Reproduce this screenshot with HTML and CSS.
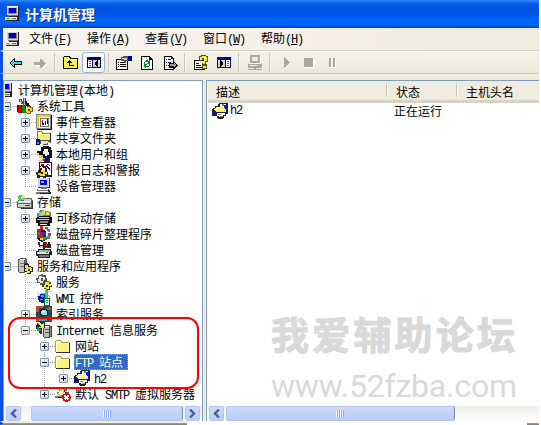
FILE: index.html
```
<!DOCTYPE html>
<html lang="zh-CN">
<head>
  <meta charset="UTF-8">
  <title>计算机管理</title>
  <link rel="stylesheet" href="styles.css">
</head>
<body>
  <svg class="defs" width="0" height="0">
    <symbol id="pc" viewBox="0 0 16 16">
      <path fill="#777" d="M3 1h11v9H3zM1 11h13v4H1z"/>
      <path fill="#d8d8d0" d="M2 0h11v9H2zM0 11h12v3H0z"/>
      <path fill="#fff" d="M2 0h11v1H2zM0 11h12v1H0z"/>
      <path fill="#222" d="M13 1h1v9h-1zM4 10h10v1H4zM12 11h2v4h-2zM1 14h12v1H1z"/>
      <path fill="#888" d="M3 2h9v6H3z"/><path fill="#0000d8" d="M4 2h7v5H4z"/>
      <path fill="#0a0" d="M2 12h2v1H2z"/><path fill="#666" d="M7 12h4v1H7z"/>
    </symbol>
    <symbol id="tools" viewBox="0 0 16 16">
      <path fill="#555" d="M2 1h3v2h2v3H4V4H2zM6 0h3v8H6z"/>
      <path fill="#bbb" d="M3 2h1v2h1v1H3zM7 0h1v7H7z"/>
      <path fill="#111" d="M8 3h2v2h2v2h1v3h-2V8H9zM0 7h1v7H0z"/>
      <path fill="#d00" d="M1 7h3v8H1z"/><path fill="#090" d="M5 7h3v8H5z"/>
      <path fill="#111" d="M4 7h1v8H4zM8 8h1v6H8z"/>
      <path fill="#6b6300" d="M10 8h4v1h2v5h-2v2h-4v-1H8v-4h2z"/>
      <path fill="#f2dc28" d="M10 9h3v1h2v3h-2v2h-3v-1H9v-3h1z"/><path fill="#444" d="M11 11h2v2h-2z"/>
    </symbol>
    <symbol id="event" viewBox="0 0 16 16">
      <path fill="#888" d="M0 0h15v15H0z"/>
      <path fill="#ffffb0" d="M1 1h13v13H1z"/><path fill="#e6d22c" d="M1 1h2v13H1zM3 1h11v2H3z"/>
      <path fill="#777" d="M4 4h9v9H4z"/><path fill="#fff" d="M5 5h7v7H5z"/><path fill="#d00" d="M6 6h1v3H6zM9 7h1v4H9z"/>
      <path fill="#00c" d="M6 9h2v2H6zM11 5h1v5h-1z"/><path fill="#111" d="M15 1h1v15H1v-1h14z"/>
    </symbol>
    <symbol id="folder" viewBox="0 0 16 16">
      <path fill="#a39d4c" d="M0 3h1V2h5v1h1v1h7v10H0z"/><path fill="#333" d="M14 5h1v10H1v-1h13z"/>
      <path fill="#ffffc8" d="M1 3h5v2h8v1H1z"/><path fill="#faf283" d="M1 6h13v8H1z"/><path fill="#ffffc8" d="M1 5h1v9H1z"/>
    </symbol>
    <symbol id="share" viewBox="0 0 16 16">
      <path fill="#8a8420" d="M1 1h5v1h1v1h7v8H1z"/><path fill="#222" d="M14 3h1v9H4v-1h10z"/>
      <path fill="#ffffb0" d="M2 2h4v2h8v1H2z"/><path fill="#f7ee70" d="M2 5h12v5H2z"/>
      <path fill="#555" d="M4 10h9v1h2v2h-3v2H7v-1H4z"/><path fill="#ddd" d="M5 11h7v1h2v1h-3v1H5z"/>
      <path fill="#0010a0" d="M0 9h4v6H0z"/><path fill="#3aa" d="M1 12h2v2H1z"/>
    </symbol>
    <symbol id="users" viewBox="0 0 16 16">
      <path fill="#111" d="M5 1h2V0h6v1h2v3h1v8h-2v3H9v-2L3 9H1V5h4z"/>
      <path fill="#fff" d="M8 3h4v3h1v3h-2v2H9V8H7V5h1z"/>
      <path fill="#b4b4b4" d="M3 9h4v3h3v3H3z"/><path fill="#001ca0" d="M9 10h3v2h2v4H8v-3h1z"/>
      <path fill="#f4d634" d="M1 7h2v2h2v2h2v2H5l-4-4z"/><path fill="#d00" d="M7 13h2v2H7z"/><path fill="#fff" d="M2 12h4v2H2z"/>
    </symbol>
    <symbol id="perf" viewBox="0 0 16 16">
      <path fill="#222" d="M3 0h13v15H3z"/><path fill="#fff" d="M4 1h11v12H4z"/>
      <path fill="none" stroke="#d00" d="M4 5l3-3 2 4 3-4 2 2"/><path fill="none" stroke="#00c" d="M5 2l3 4 3-2 3 4"/>
      <path fill="#222" d="M4 6h2v2h3V6h2v4h1v3h-2v3H7v-1H4v1H1v-3H0v-3h2V8h2z"/>
      <path fill="#e9d92c" d="M5 8h4v2h2v2H9v2H4v-1H2v-2h3z"/><path fill="#222" d="M5 10h2v2H5z"/>
    </symbol>
    <symbol id="device" viewBox="0 0 16 16">
      <path fill="#333" d="M2 0h12v10H2z"/><path fill="#d5d5d5" d="M2 0h11v9H2z"/>
      <path fill="#0000d0" d="M4 2h7v5H4z"/><path fill="#70b8ff" d="M5 3h3v2H5z"/>
      <path fill="#777" d="M5 9h6v2H5zM1 11h12v3h2v2H0v-2h1z"/><path fill="#eee" d="M2 11h10v1H2zM1 13h11v1H1z"/>
      <path fill="#222" d="M12 12h2v2h1v2H4v-1h9z"/>
    </symbol>
    <symbol id="storage" viewBox="0 0 16 16">
      <path fill="#666" d="M1 6h6V4h8v2h1v9H4v-1H0V7h1z"/><path fill="#d4d4d0" d="M7 5h7v2H7zM1 7h13v2H1zM1 10h13v3H1z"/>
      <path fill="#fff" d="M2 7h11v1H2z"/><path fill="#333" d="M8 11h5v1H8zM15 7h1v8H4v-1h11z"/>
      <path fill="#47c85a" d="M2 1h3v1h2v3H4v2H2V5H1V2h1z"/><path fill="#e9ea48" d="M5 1h2v1h1v2H5z"/><path fill="#5ac8e8" d="M4 4h4v2H4z"/><path fill="#fff" d="M4 3h1v1H4z"/>
    </symbol>
    <symbol id="remov" viewBox="0 0 16 16">
      <path fill="#777" d="M4 0h4v1h5v1h2v5H1V3h2z"/><path fill="#5cd8d8" d="M3 2h4v4H3z"/><path fill="#b8e860" d="M6 1h3v4H6z"/>
      <path fill="#f0e850" d="M10 2h3v3h-3z"/><path fill="#111" d="M1 7h2V6h11v1h2v6h-2v3H2v-3H0V8h1z"/>
      <path fill="#ccc" d="M3 7h10v1H3zM1 9h12v1H1z"/><path fill="#888" d="M4 11h8v2H4z"/><path fill="#fff" d="M4 14h7v1H4z"/>
    </symbol>
    <symbol id="defrag" viewBox="0 0 16 16">
      <path fill="#111" d="M1 4l4-2 5 3v9l-4 2-5-3z"/><path fill="#d0142c" d="M1 3h4v3h3v8H4v-2H1z"/>
      <path fill="#1a32d8" d="M6 6h4v4H6z"/><path fill="#10a040" d="M6 11h5v3H7v1H6zM2 6h2v3H2z"/><path fill="#f0d820" d="M4 12h3v2H4z"/>
      <path fill="#c420b0" d="M9 1h3v2H9zM12 7h3v3h-3z"/><path fill="#20a870" d="M11 3h3v3h-2zM11 10h3v3h-3z"/><path fill="#d82020" d="M4 0h3v3H4z"/>
    </symbol>
    <symbol id="diskmg" viewBox="0 0 16 16">
      <path fill="#222" d="M2 0h2v3h3V0h2v7H7V5H3zM12 0h2v2h1v4h-4V2h1z"/><path fill="#d00" d="M9 0h2v6H9z"/><path fill="#ccc" d="M4 4h3v2H4z"/>
      <path fill="#222" d="M2 7h13v2h1v4h-2v3H2v-2H0V9h2z"/><path fill="#aaa" d="M3 8h11v2H3z"/><path fill="#ddd" d="M1 10h12v2H1z"/>
      <path fill="#777" d="M3 13h10v2H3z"/><path fill="#0b0" d="M10 10h2v1h-2z"/>
    </symbol>
    <symbol id="apps" viewBox="0 0 16 16">
      <path fill="#555" d="M1 1h2V0h6v1h1v13H8v1H2v-1H1z"/><path fill="#c8c8c4" d="M2 2h5v12H2z"/><path fill="#fff" d="M3 1h5v1H3z"/><path fill="#777" d="M3 5h4v1H3zM3 8h4v1H3zM8 2h1v11H8z"/>
      <path fill="#222" d="M8 5h3v1h1v2h2v1h2v5h-2v2h-4v-2H7V6h1z"/><path fill="#f2e23a" d="M8 7h3v2h3v1h1v3h-2v2h-3v-2H8v-2h1v-1H8z"/><path fill="#333" d="M11 11h2v2h-2z"/>
    </symbol>
    <symbol id="gears" viewBox="0 0 16 16">
      <path fill="#555" d="M3 1h2V0h2v1h3v3h1v3H9v3H6v1H4V9H1V6H0V4h2z"/><path fill="#e4e4e4" d="M3 2h3v1h3v4H7v2H4V8H2V5h1z"/><path fill="#555" d="M5 4h2v3H5z"/>
      <path fill="#444" d="M8 6h2v1h3v1h2v3h1v2h-2v3h-4v-1H8v-2H6v-3h2z"/><path fill="#f2e23a" d="M9 8h4v2h2v2h-2v3h-3v-1H8v-3h1z"/><path fill="#333" d="M10 11h2v2h-2z"/>
    </symbol>
    <symbol id="wmi" viewBox="0 0 16 16">
      <path fill="none" stroke="#e8e020" d="M1 2l12 11M13 1L1 13"/><path fill="none" stroke="#2cd8e8" d="M1 7q6-7 13 0"/>
      <path fill="#0820a8" d="M4 4h6v1h1v6h-1v2H5v-1H3v-2H2V6h2z"/><path fill="#20b8e8" d="M5 5h3v2H5zM4 9h3v1H4z"/>
      <path fill="#28d848" d="M9 0h3v8H9z"/><path fill="#0a6820" d="M8 8h6v8H8z"/><path fill="#fff" d="M9 9h4v6H9z"/><path fill="#18b840" d="M10 10h2v1h-2zM10 12h2v1h-2z"/>
    </symbol>
    <symbol id="index" viewBox="0 0 16 16">
      <path fill="#164a56" d="M0 0h16v16H0z"/><path fill="#c84a26" d="M0 0h7v2H3v4H0zM11 1h4v3h-4zM0 11h4v4H0z"/><path fill="#20a8a8" d="M4 12h7v3H4z"/>
      <path fill="#111" d="M5 3h6v1h1v6H5V9H4V4h1z"/><path fill="#8fe4f0" d="M6 4h4v1h1v4H6V8H5V5h1z"/><path fill="#fff" d="M7 5h2v1H7z"/><path fill="#e03020" d="M11 10h2v2h2v3h-2v-2h-2z"/>
    </symbol>
    <symbol id="iis" viewBox="0 0 16 16">
      <path fill="#444" d="M7 3h7v1h2v11h-2v1H8v-1H7z"/><path fill="#bcbcbc" d="M8 5h5v10H8z"/><path fill="#fff" d="M8 4h5v1H8z"/><path fill="#555" d="M9 7h4v1H9zM9 10h4v1H9z"/><path fill="#888" d="M14 5h1v9h-1z"/>
      <path fill="#222" d="M1 1h3V0h5v6H6v4H3V7H0V3h1z"/><path fill="#f4ee28" d="M2 1h3v1h2V1h1v5H3V5h2z"/><path fill="#18a038" d="M1 5h2v2h2v3H3V9H1z"/><path fill="#123098" d="M3 9h3v3H4z"/>
    </symbol>
    <symbol id="ftp" viewBox="0 0 16 16">
      <path fill="#222" d="M7 0h9v11h-2v2h-2v2h-1v1H6v-1H5v-2H0V6h1V5h2V3h3V1h1z"/><path fill="#fff" d="M8 1h6v3H8z"/><path fill="#18b840" d="M10 1h2v2h-2z"/><path fill="#0818c8" d="M12 2h3v3h-3zM15 1v9h-1V2z"/>
      <path fill="#fff" d="M4 4h8v1H4zM2 6h2v1H2z"/><path fill="#f5ef63" d="M3 5h10v1h1v3H3z"/><path fill="#ffffc0" d="M4 6h9v1H4z"/>
      <path fill="#fff" d="M5 10h8v2h-2v2H7v-1H5z"/><path fill="#888" d="M6 11h3v1H6zM8 13h3v1H8z"/><path fill="#0818a0" d="M0 8h4v5H0z"/>
    </symbol>
    <symbol id="smtp" viewBox="0 0 16 16">
      <path fill="#777" d="M4 2h5v1h3v3h2v5H3v1H0v-2h2V6h2z"/><path fill="#fff" d="M4 5h6v4H3z"/><path fill="#e8e04a" d="M5 3h4v2h3v2H8V5H5zM2 8h4v2H2z"/><path fill="#222" d="M9 4h1v2h2v2h-2zM3 11h5v1H3z"/>
      <circle cx="11.500" cy="11.500" r="4.500" fill="#e00"/><path stroke="#fff" stroke-width="1.500" d="M9.500 9.500l4 4M13.500 9.500l-4 4"/>
    </symbol>
  </svg>

  <div class="window">
    <header class="titlebar">
      <svg class="ico"><use href="#pc"/></svg>
      <h1>计算机管理</h1>
    </header>

    <nav class="menubar">
      <svg class="ico"><use href="#pc"/></svg>
      <a>文件<span class="en">(<u>F</u>)</span></a>
      <a>操作<span class="en">(<u>A</u>)</span></a>
      <a>查看<span class="en">(<u>V</u>)</span></a>
      <a>窗口<span class="en">(<u>W</u>)</span></a>
      <a>帮助<span class="en">(<u>H</u>)</span></a>
    </nav>

    <div class="toolbar">
      <span class="tool"><svg class="ico"><path fill="#000" d="M1 7h1V6h1V5h1V4h1V3h1v3h7v4H6v3H5v-1H4v-1H3v-1H2V9H1z"/><path fill="#20e0e8" d="M2 7h1V6h1V5h1v2h7v2H5v2H4v-1H3V9H2z"/></svg></span>
      <span class="tool"><svg class="ico"><path fill="#fff" d="M3 8h7V5h1v1h2v2h2v2h-1v1h-1v1h-1v1h-1v1h-1v-3H3z"/><path fill="#aca899" d="M2 7h6V4h2v1h1v1h1v1h1v1h1v1h-1v1h-1v1h-1v1h-1v1H8v-3H2z"/></svg></span>
      <span class="sep"></span>
      <span class="tool"><svg class="ico"><path fill="#000" d="M1 1h6v1h1v1h7v11H0V2h1z"/><path fill="#f8f04c" d="M1 3h6v1h7v9H1z"/><path fill="#ffffa8" d="M1 2h5v1H1zM1 4h13v1H1z"/><path fill="#000" d="M6 5h1v1h1v1h1v1H7v2h4v1H6V8H4V7h1V6h1z"/></svg></span>
      <span class="tool pressed"><svg class="ico"><path fill="#000080" d="M1 2h14v11H1z"/><path fill="#fff" d="M2 5h4v7H2z"/><path fill="#d8d4c4" d="M7 5h7v7H7z"/><path fill="#3858d0" d="M3 6h2v1H3zM3 8h2v1H3zM3 10h2v1H3z"/><path fill="#000" d="M12 5v7h-1v-1h-1v-1H9V7h1V6h1V5z"/></svg></span>
      <span class="sep tight"></span>
      <span class="tool"><svg class="ico"><path fill="#000" d="M0 4h12v11H0z"/><path fill="#fff" d="M1 5h10v9H1z"/><path fill="#000" d="M2 7h1v1H2zM4 7h5v1H4zM2 9h1v1H2zM4 9h6v1H4zM2 11h1v1H2zM4 11h6v1H4z"/><path fill="#555" d="M5 2h2V1h5v5h-2v2H8V6H5z"/><path fill="#ccc" d="M6 3h5v2H8V4H6z"/><path fill="#000090" d="M12 1h4v5h-4z"/></svg></span>
      <span class="tool"><svg class="ico"><path fill="#000" d="M2 1h9v1h1v1h1v1h1v11H2z"/><path fill="#fff" d="M3 2h7v3h3v9H3z"/><path fill="#098a20" d="M6 6h1V5h2v1h1V5h1v4H8V8h1V7H6v2H5V7h1zM5 9h3v1H7v1h3V9h1v2h-1v1H7v1H6v-1H5z"/></svg></span>
      <span class="tool"><svg class="ico"><path fill="#000" d="M2 1h8v1h1v1h1v12H2z"/><path fill="#fff" d="M3 2h6v2h2v10H3z"/><path fill="#0818a0" d="M4 4h1v1H4zM6 4h3v1H6zM4 7h1v1H4zM6 7h3v1H6zM4 10h1v1H4zM6 10h2v1H6z"/><path fill="#000" d="M7 8h4V6h1v1h1v1h1v1h1v1h1v1h-1v1h-1v1h-1v1h-1v1h-1v-2H7z"/><path fill="#999" d="M8 9h4V8h1v1h1v2h-1v1h-1v-1H8z"/></svg></span>
      <span class="sep"></span>
      <span class="tool"><svg class="ico"><path fill="#000" d="M1 5h11v10H1z"/><path fill="#fff" d="M2 6h9v8H2z"/><path fill="#000" d="M3 8h3v1H3zM3 10h5v1H3zM3 12h6v1H3z"/><path fill="#55500a" d="M6 1h2V0h5v1h2v6h-2v2h1v5H9V8h2V5H9v1H6z"/><path fill="#fff028" d="M7 2h2V1h4v1h1v4h-2v3h-2V7h1V3H9v2H7zM10 11h3v2h-3z"/></svg></span>
      <span class="tool"><svg class="ico"><path fill="#000080" d="M1 2h14v11H1z"/><path fill="#d8d4c4" d="M2 5h7v7H2z"/><path fill="#fff" d="M10 5h4v7h-4z"/><path fill="#3858d0" d="M11 6h2v1h-2zM11 8h2v1h-2zM11 10h2v1h-2z"/><path fill="#000" d="M4 5h1v1h1v1h1v3H6v1H5v1H4z"/></svg></span>
      <span class="sep"></span>
      <span class="tool"><svg class="ico"><path fill="#fff" d="M4 1h10v8H4zM2 11h14v2H2z"/><path fill="#aca899" d="M3 0h10v8H3zM1 9h14v4H1zM7 13h2v1h6v1H1v-1h6z"/><path fill="#efecdf" d="M5 2h6v4H5zM2 10h8v1H2z"/></svg></span>
      <span class="sep"></span>
      <span class="tool"><svg class="ico"><path fill="#fff" d="M6 3l6 5-6 6z"/><path fill="#aca899" d="M6 2h1v1h1v1h1v1h1v1h1v1h1v1h-1v1h-1v1H9v1H8v1H7v1H6z"/></svg></span>
      <span class="tool"><svg class="ico"><path fill="#fff" d="M4 4h10v9H4z"/><path fill="#aca899" d="M3 3h9v9H3z"/></svg></span>
      <span class="tool"><svg class="ico"><path fill="#fff" d="M5 4h3v9H5zM9 4h3v9H9z"/><path fill="#aca899" d="M5 3h2v9H5zM9 3h2v9H9z"/></svg></span>
    </div>

    <main class="panes">
      <section class="pane left">
        <div class="tree">
          <div class="row root"><svg class="ico"><use href="#pc"/></svg><span class="name">计算机管理<span class="en">(</span>本地<span class="en">)</span></span></div>
          <ul class="top">
            <li>
              <div class="row"><i class="exp open"></i><svg class="ico"><use href="#tools"/></svg><span class="name">系统工具</span></div>
              <ul>
                <li><div class="row"><i class="exp"></i><svg class="ico"><use href="#event"/></svg><span class="name">事件查看器</span></div></li>
                <li><div class="row"><i class="exp"></i><svg class="ico"><use href="#share"/></svg><span class="name">共享文件夹</span></div></li>
                <li><div class="row"><i class="exp"></i><svg class="ico"><use href="#users"/></svg><span class="name">本地用户和组</span></div></li>
                <li><div class="row"><i class="exp"></i><svg class="ico"><use href="#perf"/></svg><span class="name">性能日志和警报</span></div></li>
                <li><div class="row"><svg class="ico"><use href="#device"/></svg><span class="name">设备管理器</span></div></li>
              </ul>
            </li>
            <li>
              <div class="row"><i class="exp open"></i><svg class="ico"><use href="#storage"/></svg><span class="name">存储</span></div>
              <ul>
                <li><div class="row"><i class="exp"></i><svg class="ico"><use href="#remov"/></svg><span class="name">可移动存储</span></div></li>
                <li><div class="row"><svg class="ico"><use href="#defrag"/></svg><span class="name">磁盘碎片整理程序</span></div></li>
                <li><div class="row"><svg class="ico"><use href="#diskmg"/></svg><span class="name">磁盘管理</span></div></li>
              </ul>
            </li>
            <li>
              <div class="row"><i class="exp open"></i><svg class="ico"><use href="#apps"/></svg><span class="name">服务和应用程序</span></div>
              <ul>
                <li><div class="row"><svg class="ico"><use href="#gears"/></svg><span class="name">服务</span></div></li>
                <li><div class="row"><svg class="ico"><use href="#wmi"/></svg><span class="name"><span class="en">WMI </span>控件</span></div></li>
                <li><div class="row"><i class="exp"></i><svg class="ico"><use href="#index"/></svg><span class="name">索引服务</span></div></li>
                <li>
                  <div class="row"><i class="exp open"></i><svg class="ico"><use href="#iis"/></svg><span class="name"><span class="en">Internet </span>信息服务</span></div>
                  <ul>
                    <li><div class="row"><i class="exp"></i><svg class="ico"><use href="#folder"/></svg><span class="name">网站</span></div></li>
                    <li>
                      <div class="row"><i class="exp open"></i><svg class="ico"><use href="#folder"/></svg><span class="name selected"><span class="en">FTP </span>站点</span></div>
                      <ul>
                        <li><div class="row"><i class="exp"></i><svg class="ico"><use href="#ftp"/></svg><span class="name"><span class="en">h2</span></span></div></li>
                      </ul>
                    </li>
                    <li><div class="row"><i class="exp"></i><svg class="ico"><use href="#smtp"/></svg><span class="name">默认<span class="en"> SMTP </span>虚拟服务器</span></div></li>
                  </ul>
                </li>
              </ul>
            </li>
          </ul>
        </div>
        <div class="scrollbar">
          <span class="arrow"><svg width="7" height="9"><path d="M6 .5L2 4.500 6 8.500"/></svg></span>
          <span class="thumb"><i class="grip"></i></span>
          <span class="arrow"><svg width="7" height="9"><path d="M1 .5L5 4.500 1 8.500"/></svg></span>
        </div>
      </section>

      <section class="pane right">
        <div class="list-head"><span>描述</span><span>状态</span><span>主机头名</span></div>
        <div class="list-row">
          <span class="cell"><svg class="ico"><use href="#ftp"/></svg><span class="en">h2</span></span>
          <span class="cell">正在运行</span>
        </div>
        <div class="scrollbar">
          <span class="arrow"><svg width="7" height="9"><path d="M6 .5L2 4.500 6 8.500"/></svg></span>
          <span class="thumb"><i class="grip"></i></span>
        </div>
        <svg class="watermark" width="262" height="92">
          <text class="wm-name" x="2" y="36" textLength="244">我爱辅助论坛</text>
          <text class="wm-url" x="2" y="84" textLength="246">www.52fzba.com</text>
        </svg>
      </section>
    </main>
    <footer class="edge"><span></span><span></span></footer>
    <div class="mark"></div>
  </div>
</body>
</html>
```
FILE: styles.css
```
* {
  box-sizing: border-box;
}
body {
  margin: 0;
  background: #fff;
  font: 12px/16px "Noto Sans CJK SC", sans-serif;
  color: #000;
}
.defs {
  position: absolute;
}
.window {
  position: relative;
  width: 539px;
  height: 425px;
  overflow: hidden;
}
.ico {
  width: 16px;
  height: 16px;
  flex: none;
  shape-rendering: crispEdges;
}
/* half-width latin text, 6px per letter */
.en {
  font-family: "Liberation Mono", monospace;
  letter-spacing: -1.2px;
  white-space: pre;
}

.titlebar {
  height: 28px;
  display: flex;
  align-items: center;
  padding: 0 0 0 5px;
  background: linear-gradient(#2a8cf8 0, #0a62ec 3px, #0054e0 7px, #0055e8 14px, #0066ff 20px, #0062fa 25px, #0040c8 28px);
}
.titlebar h1 {
  margin: 0 0 0 4px;
  font-size: 14px;
  line-height: 18px;
  font-weight: bold;
  color: #fff;
  text-shadow: 1px 1px 0 #00308c;
}

.menubar {
  height: 23px;
  display: flex;
  align-items: center;
  padding-left: 2px;
  border-left: 3px solid #0a50dc;
  border-bottom: 1px solid #d6d2c2;
  background: linear-gradient(90deg, #f7f6f2, #f6efea 55%, #efecdf 90%);
}
.menubar a {
  width: 42px;
  margin-left: 8px;
  margin-right: 8px;
  white-space: nowrap;
}

.toolbar {
  height: 23px;
  display: flex;
  align-items: center;
  padding-left: 2px;
  border-left: 3px solid #0a50dc;
  border-top: 1px solid #fff;
  border-bottom: 1px solid #cdc9b5;
  background: linear-gradient(#f4f2ec, #eae7d9);
}
.tool {
  width: 23px;
  height: 21px;
  display: flex;
  align-items: center;
  justify-content: center;
}
.tool.pressed {
  background: #fff;
  border: 1px solid #98b5d2;
  border-radius: 3px;
}
.sep {
  width: 2px;
  height: 19px;
  margin: 0 3px;
  border-left: 1px solid #cbc7b4;
  border-right: 1px solid #f6f4ec;
}
.sep.tight {
  margin-right: 2px;
}

.panes {
  display: flex;
  gap: 3px;
  height: 347px;
  padding-top: 6px;
  border-left: 3px solid #0a50dc;
  background: #efebde;
}
.pane {
  display: flex;
  flex-direction: column;
  background: #fff;
  border-top: 1px solid #7f9db9;
}
.left {
  width: 200px;
  border-left: 1px solid #7f9db9;
  border-right: 1px solid #7f9db9;
}
.right {
  flex: 1;
  position: relative;
  border-left: 1px solid #7f9db9;
  padding-left: 1px;
}

.tree {
  flex: 1;
  overflow: hidden;
  margin-left: 1px;
  padding-top: 1px;
}
.tree ul {
  list-style: none;
  margin: 0 0 0 19px;
  padding: 0;
}
.tree ul.top {
  margin-left: -3px;
}
.tree li {
  background: repeating-linear-gradient(#aaa79a 0 1px, transparent 1px 2px) 4px 0 / 1px 100% no-repeat;
}
.tree li:last-child {
  background-size: 1px 9px;
}
.row {
  position: relative;
  height: 16px;
  display: flex;
  align-items: center;
  padding-left: 15px;
  background: repeating-linear-gradient(90deg, #aaa79a 0 1px, transparent 1px 2px) 4px 8px / 11px 1px no-repeat;
}
.root {
  padding-left: 0;
  margin-left: -7px;
  background: none;
}
.name {
  margin-left: 3px;
  padding: 0 1px;
  height: 16px;
  line-height: 15px;
  white-space: nowrap;
}
.selected {
  background: #316ac5;
  color: #fff;
  outline: 1px dotted #d09a40;
  outline-offset: -1px;
  padding-right: 5px;
}
/* plus / minus box */
.exp {
  position: absolute;
  left: 0;
  top: 4px;
  width: 9px;
  height: 9px;
  border: 1px solid #7898b5;
  border-radius: 1px;
  background:
    linear-gradient(#000, #000) 1px 3px / 5px 1px no-repeat,
    linear-gradient(#000, #000) 3px 1px / 1px 5px no-repeat,
    linear-gradient(135deg, #fff, #d5cfc2);
}
.exp.open {
  background:
    linear-gradient(#000, #000) 1px 3px / 5px 1px no-repeat,
    linear-gradient(135deg, #fff, #d5cfc2);
}

.list-head {
  height: 22px;
  display: flex;
  background: #efebde;
  border-bottom: 3px solid #d8d3c3;
}
.list-head span {
  width: 70px;
  height: 13px;
  margin-top: 3px;
  padding-left: 8px;
  line-height: 15px;
  border-left: 1px solid #fff;
}
.list-head span:first-child {
  width: 179px;
  border-left: 0;
}
.list-head span + span {
  box-shadow: -1px 0 #c8c4b4;
}
.list-row {
  flex: 1;
  display: flex;
}
.cell {
  display: flex;
  align-items: center;
  height: 15px;
}
.cell:first-child {
  width: 186px;
  padding-left: 4px;
}
.cell .en {
  margin-left: 2px;
}

.scrollbar {
  height: 15px;
  display: flex;
  gap: 3px;
  padding-left: 2px;
  background: linear-gradient(#f1efe9, #fefefe);
}
.left .scrollbar {
  padding-right: 2px;
}
.right .scrollbar {
  gap: 2px;
  padding-left: 1px;
}
.arrow,
.thumb {
  display: flex;
  align-items: center;
  justify-content: center;
  border: 1px solid #b4c6f0;
  border-radius: 2px;
  background: linear-gradient(#ccdafe, #bacdfd);
}
.arrow {
  width: 15px;
}
.arrow path {
  fill: none;
  stroke: #4d6185;
  stroke-width: 2.4;
}
.thumb {
  flex: 1;
  box-shadow: 1px 0 #7b9bd0;
}
.left .thumb {
  margin-left: 7px;
}
.right .thumb {
  flex: none;
  width: 228px;
}
.grip {
  width: 8px;
  height: 7px;
  background: repeating-linear-gradient(90deg, #f4f8ff 0 1px, #8caaf0 1px 2px);
}

.watermark {
  position: absolute;
  left: 62px;
  top: 232px;
  fill: #d9d9d9;
}
.wm-name {
  font: bold 38px "Noto Sans CJK SC", sans-serif;
  stroke: #d9d9d9;
  stroke-width: 1;
  stroke-linejoin: round;
}
.wm-url {
  font: 32px Roboto, sans-serif;
}

.edge {
  height: 4px;
  display: flex;
  justify-content: space-between;
  background: #fff;
}
.edge span {
  width: 187px;
  border-left: 3px solid #0a50dc;
  border-top: 2px solid #efebde;
  border-bottom: 1px solid #88837a;
  background: #7f9db9;
}
.edge span + span {
  width: 12px;
  border-left: 0;
  border-top-color: #fff;
}

/* red frame around the IIS nodes */
.mark {
  position: absolute;
  left: 8px;
  top: 317px;
  width: 191px;
  height: 72px;
  border: 2px solid #f00;
  border-radius: 12px;
}
```
